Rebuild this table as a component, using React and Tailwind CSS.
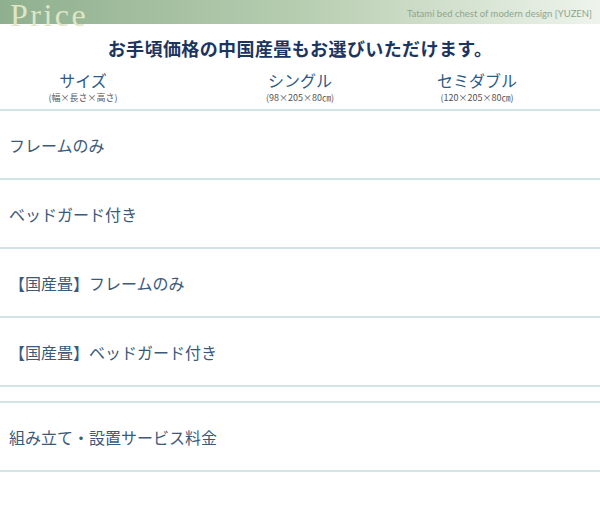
const rows = [
  "フレームのみ",
  "ベッドガード付き",
  "【国産畳】フレームのみ",
  "【国産畳】ベッドガード付き",
];

const cols = [
  { name: "サイズ", sub: "(幅×長さ×高さ)", w: "w-[166px]" },
  { name: "シングル", sub: "(98×205×80㎝)", w: "w-[268px]" },
  { name: "セミダブル", sub: "(120×205×80㎝)", w: "w-[86px]" },
];

export default function App() {
  return (
    <div className="w-[600px] h-[505px] bg-white font-['Noto_Sans_CJK_JP',sans-serif] overflow-hidden">
      {/* band */}
      <div className="h-[24px] flex items-start justify-between bg-gradient-to-r from-[#8fb08f] via-[#b7cdb0] to-[#eef4ec]">
        <span className="pl-[10px] text-[32px] leading-[30px] text-[#dde6c6] font-['Liberation_Serif',serif] tracking-[2.5px]">
          Price
        </span>
        <span className="pt-[9px] pr-[8px] text-[9.5px] leading-[10px] text-[#8fa58f] font-['Lato',sans-serif]">
          Tatami bed chest of modern design [YUZEN]
        </span>
      </div>

      <h1 className="mt-[12px] text-center text-[18px] leading-[24px] font-bold tracking-[0.4px] text-[#1c3560] font-['Noto_Sans_CJK_JP',serif]">
        お手頃価格の中国産畳もお選びいただけます。
      </h1>

      {/* header row */}
      <div className="mt-[10px] h-[41px] flex border-b-2 border-[#d3e4e6]">
        {cols.map((c) => (
          <div key={c.name} className={`${c.w} flex flex-col items-center`}>
            <span className="text-[16px] leading-[20px] text-[#2d5a85]">{c.name}</span>
            <span className="mt-[2px] text-[9px] leading-[11px] text-[#555] whitespace-nowrap">{c.sub}</span>
          </div>
        ))}
      </div>

      {rows.map((r) => (
        <div
          key={r}
          className="h-[69px] flex items-center pl-[9px] border-b-2 border-[#d3e4e6] text-[16px] text-[#3b5a7a]"
        >
          {r}
        </div>
      ))}

      <div className="h-[16px] border-b-2 border-[#d3e4e6]" />

      <div className="h-[69px] flex items-center pl-[9px] border-b-2 border-[#d3e4e6] text-[16px] text-[#3b5a7a]">
        組み立て・設置サービス料金
      </div>
    </div>
  );
}
